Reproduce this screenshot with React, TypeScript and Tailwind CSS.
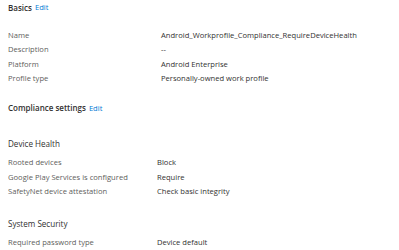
import React from 'react';

type Row = { label: string; value: string };

const basics: Row[] = [
  { label: 'Name', value: 'Android_Workprofile_Compliance_RequireDeviceHealth' },
  { label: 'Description', value: '--' },
  { label: 'Platform', value: 'Android Enterprise' },
  { label: 'Profile type', value: 'Personally-owned work profile' },
];

const deviceHealth: Row[] = [
  { label: 'Rooted devices', value: 'Block' },
  { label: 'Google Play Services is configured', value: 'Require' },
  { label: 'SafetyNet device attestation', value: 'Check basic integrity' },
];

const systemSecurity: Row[] = [{ label: 'Required password type', value: 'Device default' }];

function SectionTitle({ title }: { title: string }) {
  return (
    <div className="flex h-4 items-center gap-[3px] text-[8px]">
      <span className="font-semibold text-[#323130]">{title}</span>
      <a href="#" className="text-[7.6px] text-[#0078d4]">Edit</a>
    </div>
  );
}

function Rows({ rows, labelWidth }: { rows: Row[]; labelWidth: string }) {
  return (
    <div>
      {rows.map((row) => (
        <div key={row.label} className="flex h-[14.6px] items-center">
          <span className={`${labelWidth} shrink-0 text-[#605e5c]`}>{row.label}</span>
          <span className="text-[#323130]">{row.value}</span>
        </div>
      ))}
    </div>
  );
}

export default function App() {
  return (
    <div
      className="h-[250px] w-[399px] overflow-hidden bg-white pl-2 text-[7.6px]"
      style={{ fontFamily: '"Open Sans", sans-serif' }}
    >
      <SectionTitle title="Basics" />
      <div className="mt-[12px]">
        <Rows rows={basics} labelWidth="w-[153px]" />
      </div>
      <div className="mt-[14px]">
        <SectionTitle title="Compliance settings" />
      </div>
      <div className="mt-[20px] flex h-4 items-center text-[8.1px] text-[#323130]">Device Health</div>
      <div className="mt-[3px]">
        <Rows rows={deviceHealth} labelWidth="w-[149px]" />
      </div>
      <div className="mt-[17px] flex h-4 items-center text-[8.1px] text-[#323130]">System Security</div>
      <div className="mt-[3px]">
        <Rows rows={systemSecurity} labelWidth="w-[149px]" />
      </div>
    </div>
  );
}
